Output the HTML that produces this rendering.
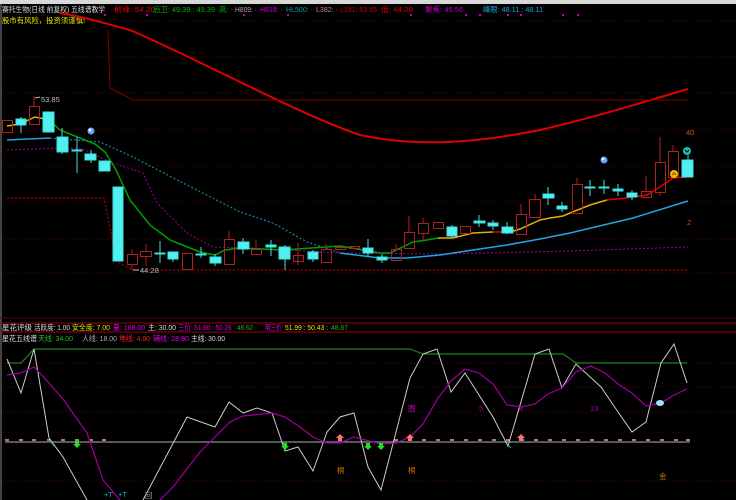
<!DOCTYPE html>
<html><head><meta charset="utf-8"><style>
html,body{margin:0;padding:0;background:#000;width:736px;height:500px;overflow:hidden}
svg{display:block}
text{font-family:"Liberation Sans","Noto Sans CJK SC",sans-serif;font-size:7.5px}
</style></head><body>
<svg width="736" height="500" viewBox="0 0 736 500" xmlns="http://www.w3.org/2000/svg">
<rect width="736" height="500" fill="#000"/>
<rect x="0" y="0" width="736" height="4" fill="#d8d8d8"/>
<line x1="1" y1="4" x2="1" y2="500" stroke="#888" stroke-width="1"/>
<g stroke="#5a0000" stroke-width="1" stroke-dasharray="1,2">
<line x1="3" y1="21" x2="736" y2="21"/><line x1="3" y1="57" x2="736" y2="57"/><line x1="3" y1="93" x2="736" y2="93"/><line x1="3" y1="130" x2="736" y2="130"/><line x1="3" y1="166" x2="736" y2="166"/><line x1="3" y1="202" x2="736" y2="202"/><line x1="3" y1="239" x2="736" y2="239"/><line x1="3" y1="273" x2="736" y2="273"/>
<line x1="3" y1="363" x2="736" y2="363"/><line x1="3" y1="387" x2="736" y2="387"/><line x1="3" y1="412" x2="736" y2="412"/><line x1="3" y1="432" x2="736" y2="432"/><line x1="3" y1="456" x2="736" y2="456"/><line x1="3" y1="481" x2="736" y2="481"/>
</g>
<g lengthAdjust="spacingAndGlyphs">
<text x="2" y="12" fill="#ddd" textLength="103" lengthAdjust="spacingAndGlyphs">赛托生物(日线 前复权) 五线谱教学</text>
<text x="114" y="12" fill="#e00000" textLength="41" lengthAdjust="spacingAndGlyphs">前锋: 54.20</text>
<text x="153" y="12" fill="#00b000" textLength="62" lengthAdjust="spacingAndGlyphs">后卫: 49.39 : 49.39</text>
<text x="219" y="12" fill="#00b000" textLength="14" lengthAdjust="spacingAndGlyphs">高: ·</text>
<text x="235" y="12" fill="#aaa" textLength="22" lengthAdjust="spacingAndGlyphs">H809: ·</text>
<text x="260" y="12" fill="#d000d0" textLength="23" lengthAdjust="spacingAndGlyphs">H618: ·</text>
<text x="286" y="12" fill="#00a0a0" textLength="27" lengthAdjust="spacingAndGlyphs">HL500: ·</text>
<text x="316" y="12" fill="#d08080" textLength="22" lengthAdjust="spacingAndGlyphs">L382: ·</text>
<text x="340" y="12" fill="#c00000" textLength="37" lengthAdjust="spacingAndGlyphs">L191: 53.65</text>
<text x="381" y="12" fill="#e00000" textLength="32" lengthAdjust="spacingAndGlyphs">低: 44.28</text>
<text x="425" y="12" fill="#c000c0" textLength="38" lengthAdjust="spacingAndGlyphs">聚焦: 45.56</text>
<text x="483" y="12" fill="#20a0e0" textLength="60" lengthAdjust="spacingAndGlyphs">峰眼: 48.11 : 48.11</text>
<text x="2" y="23" fill="#e8e800" textLength="83" lengthAdjust="spacingAndGlyphs">股市有风险，投资须谨慎!</text>
</g>
<g fill="#c000c0"><rect x="104" y="14" width="2" height="2"/><rect x="146" y="14" width="2" height="2"/><rect x="243" y="14" width="2" height="2"/><rect x="287" y="14" width="2" height="2"/><rect x="410" y="14" width="2" height="2"/><rect x="465" y="14" width="2" height="2"/><rect x="479" y="14" width="2" height="2"/><rect x="507" y="14" width="2" height="2"/><rect x="520" y="14" width="2" height="2"/><rect x="562" y="14" width="2" height="2"/><rect x="577" y="14" width="2" height="2"/></g>
<path d="M60,13 C90,18 110,25 130,30 C200,60 300,115 360,135 C420,148 480,142 540,130 C600,116 650,100 688,89" fill="none" stroke="#e00000" stroke-width="2"/>
<path d="M108,30 L110,88 L133,100 L688,100" fill="none" stroke="#800000" stroke-width="1"/>
<path d="M7,198 L104,198 L117,262 L133,270 L688,270" fill="none" stroke="#900000" stroke-width="1.5" stroke-dasharray="2,2"/>
<path d="M7,150 L60,148 L83,149 L110,162 L143,173 L157,203 L187,233 L213,247 L250,248 L340,253 L440,254 L570,251 L688,247" fill="none" stroke="#a000a0" stroke-width="1" stroke-dasharray="2,2"/>
<path d="M50,138 L100,142 L133,157 L183,183 L240,212 L273,223 L307,242 L340,253" fill="none" stroke="#1088a8" stroke-width="1.2" stroke-dasharray="2,2"/>
<path d="M7,140 L50,138" fill="none" stroke="#20a0e0" stroke-width="1.5"/>
<path d="M340,253 L380,258 L407,258 L440,255 L473,250 L507,245 L540,239 L570,233 L633,218 L688,201" fill="none" stroke="#20a8e0" stroke-width="1.5"/>
<path d="M7,126 L20,124 L35,117 L45,119 L50,121" fill="none" stroke="#e0b000" stroke-width="1.5"/>
<path d="M50,121 L60,130 L80,138 L95,144 L105,152 L115,168 L130,200 L150,225 L170,240 L190,248 L200,252 L215,255 L225,250 L240,248 L283,250 L340,246 L380,253 L390,253 L413,242 L427,240 L438,238" fill="none" stroke="#00a000" stroke-width="1.5"/>
<path d="M438,238 L453,238 L473,233 L493,232" fill="none" stroke="#e0b000" stroke-width="1.5"/>
<path d="M493,232 L510,232" fill="none" stroke="#e00000" stroke-width="1.5"/>
<path d="M510,232 L520,229 L540,220 L550,218 L563,216 L570,213 L590,205 L607,200" fill="none" stroke="#e0b000" stroke-width="1.5"/>
<path d="M607,200 L627,198 L647,195 L660,187 L673,178 L687,177" fill="none" stroke="#e00000" stroke-width="1.5"/>
<g fill="none" stroke="#b02020" stroke-width="1">
<path d="M34,96V106M160,241V263M201,247V258M229,231V239M256,240V249M298,243V265M326,244V249M396,244V249M409,216V232M423,218V223M423,233V240M521,204V214M535,194V199M646,176V191M660,137V162M660,192V196M673,145V151"/>
<rect x="2.5" y="120.5" width="10" height="12"/>
<rect x="29.5" y="106.5" width="10" height="18"/>
<rect x="127.5" y="254.5" width="10" height="10"/><path d="M132,249V254M132,264V270"/>
<rect x="140.5" y="251.5" width="11" height="5"/><path d="M146,244V251M146,256V266"/>
<rect x="182.5" y="253.5" width="10" height="16"/>
<rect x="224.5" y="239.5" width="10" height="25"/>
<rect x="251.5" y="249.5" width="10" height="5"/>
<rect x="293.5" y="255.5" width="10" height="6"/>
<rect x="321.5" y="249.5" width="10" height="13"/>
<rect x="335.5" y="247.5" width="10" height="2"/>
<rect x="349.5" y="246.5" width="10" height="2"/>
<rect x="391.5" y="249.5" width="10" height="11"/>
<rect x="404.5" y="232.5" width="10" height="16"/>
<rect x="418.5" y="223.5" width="10" height="10"/>
<rect x="433.5" y="222.5" width="10" height="6"/>
<rect x="460.5" y="226.5" width="10" height="7"/>
<rect x="516.5" y="214.5" width="10" height="20"/>
<rect x="529.5" y="199.5" width="11" height="18"/>
<rect x="572.5" y="184.5" width="10" height="29"/><path d="M577,178V184"/>
<rect x="641.5" y="191.5" width="10" height="6"/>
<rect x="655.5" y="162.5" width="10" height="30"/>
<rect x="668.5" y="151.5" width="10" height="26"/>
</g>
<g fill="#50f0f0" stroke="#40e0e0" stroke-width="1">
<path d="M21,117V133M48,112V132M62,128V154M77,137V173M91,150V163M160,241V263M173,252V262M201,247V258M215,254V266M243,238V254M271,240V256M285,245V270M313,250V262M368,239V256M382,254V263M452,225V238M479,215V227M493,220V230M507,222V234M548,187V205M562,202V212M590,180V196M604,180V194M618,184V196M632,190V200M688,155V177"/>
<rect x="16" y="119" width="10" height="6"/>
<rect x="43" y="112" width="11" height="20"/>
<rect x="57" y="137" width="11" height="15"/>
<rect x="72" y="150" width="10" height="1"/>
<rect x="85" y="154" width="11" height="6"/>
<rect x="99" y="161" width="11" height="10"/>
<rect x="113" y="187" width="10" height="74"/>
<rect x="155" y="253" width="10" height="1"/>
<rect x="168" y="252" width="10" height="7"/>
<rect x="196" y="254" width="10" height="1"/>
<rect x="210" y="257" width="11" height="6"/>
<rect x="238" y="242" width="11" height="7"/>
<rect x="266" y="245" width="10" height="2"/>
<rect x="279" y="247" width="11" height="12"/>
<rect x="308" y="252" width="10" height="7"/>
<rect x="363" y="248" width="10" height="5"/>
<rect x="377" y="257" width="10" height="3"/>
<rect x="447" y="227" width="10" height="9"/>
<rect x="474" y="221" width="11" height="2"/>
<rect x="488" y="223" width="10" height="3"/>
<rect x="502" y="227" width="11" height="6"/>
<rect x="543" y="194" width="11" height="4"/>
<rect x="557" y="206" width="10" height="3"/>
<rect x="585" y="187" width="10" height="1"/>
<rect x="599" y="187" width="10" height="1"/>
<rect x="613" y="189" width="10" height="2"/>
<rect x="627" y="193" width="10" height="4"/>
<rect x="682" y="160" width="11" height="17"/>
</g>
<text x="41" y="102" fill="#bbb">53.85</text><path d="M35,98 L40,97" stroke="#bbb"/>
<text x="140" y="273" fill="#bbb">44.28</text><path d="M133,270 L139,270" stroke="#bbb"/>
<text x="686" y="135" fill="#d05000">40</text>
<text x="687" y="225" fill="#d05000">2</text>
<circle cx="91" cy="131" r="3.5" fill="#60a0ff"/><circle cx="90" cy="130" r="1.5" fill="#e0f0ff"/>
<circle cx="604" cy="160" r="3.5" fill="#60a0ff"/><circle cx="603" cy="159" r="1.5" fill="#e0f0ff"/>
<circle cx="687" cy="151" r="4" fill="#20c0a0"/><path d="M685,150 L687,152 L689,150" stroke="#003" fill="none"/>
<circle cx="674" cy="174" r="4" fill="#f0c000"/><path d="M672,175 L674,173 L676,175" stroke="#a03000" fill="none"/>
<line x1="0" y1="318" x2="736" y2="318" stroke="#600000"/>
<line x1="0" y1="323" x2="736" y2="323" stroke="#a00000"/>
<line x1="0" y1="332" x2="736" y2="332" stroke="#a00000"/>
<text x="2" y="330" fill="#ddd" textLength="30" lengthAdjust="spacingAndGlyphs">星花评级</text>
<text x="34" y="330" fill="#ddd" textLength="36" lengthAdjust="spacingAndGlyphs">活跃度: 1.00</text>
<text x="72" y="330" fill="#e8e800" textLength="38" lengthAdjust="spacingAndGlyphs">安全度: 7.00</text>
<text x="113" y="330" fill="#e000e0" textLength="32" lengthAdjust="spacingAndGlyphs">量: 168.00</text>
<text x="148" y="330" fill="#ddd" textLength="28" lengthAdjust="spacingAndGlyphs">主: 30.00</text>
<text x="178" y="330" fill="#e000e0" textLength="57" lengthAdjust="spacingAndGlyphs">三价: 51.90 : 50.26 :</text>
<text x="237" y="330" fill="#20b020" textLength="16" lengthAdjust="spacingAndGlyphs">48.62</text>
<text x="265" y="330" fill="#e000e0" textLength="18" lengthAdjust="spacingAndGlyphs">明三价:</text>
<text x="285" y="330" fill="#e8e800" textLength="43" lengthAdjust="spacingAndGlyphs">51.99 : 50.43 :</text>
<text x="331" y="330" fill="#20b020" textLength="17" lengthAdjust="spacingAndGlyphs">48.87</text>
<text x="2" y="341" fill="#ddd" textLength="35" lengthAdjust="spacingAndGlyphs">星花五线谱</text>
<text x="38" y="341" fill="#20c020" textLength="35" lengthAdjust="spacingAndGlyphs">天线: 34.00</text>
<text x="82" y="341" fill="#aaa" textLength="35" lengthAdjust="spacingAndGlyphs">人线: 18.00</text>
<text x="119" y="341" fill="#ff2020" textLength="31" lengthAdjust="spacingAndGlyphs">地线: 4.00</text>
<text x="153" y="341" fill="#e000e0" textLength="36" lengthAdjust="spacingAndGlyphs">辅线: 28.80</text>
<text x="191" y="341" fill="#ddd" textLength="34" lengthAdjust="spacingAndGlyphs">主线: 30.00</text>
<line x1="5" y1="442" x2="690" y2="442" stroke="#777" stroke-width="1.5"/>
<g stroke="#f0a0a0" stroke-width="1.5">
<path d="M5,440h4M19,440h4M32,440h4M47,440h4M61,440h4M75,440h4M89,440h4M102,440h4"/>
<path d="M394,440h4M408,440h4M422,440h4M436,440h4M450,440h4M464,440h4M478,440h4M492,440h4M506,440h4M520,440h4M534,440h4M548,440h4M562,440h4M576,440h4M590,440h4M604,440h4M618,440h4M632,440h4M646,440h4M660,440h4M674,440h4M686,440h4"/>
</g>
<path d="M7,363 L21,363 L34,349 L410,349 L423,354 L563,354 L576,363 L687,363" fill="none" stroke="#208020" stroke-width="1.2"/>
<path d="M7,359 L21,393 L34,349 L49,438 L63,457 L87,500 M143,500 L187,417 L215,427 L229,402 L243,413 L257,408 L272,413 L285,451 L298,447 L313,471 L327,432 L340,417 L354,413 L368,467 L381,490 L410,378 L423,354 L437,349 L451,392 L465,373 L493,417 L508,446 L535,354 L549,349 L562,388 L576,364 L601,387 L618,412 L632,432 L646,422 L661,363 L674,344 L687,383" fill="none" stroke="#ccc" stroke-width="1"/>
<path d="M7,375 L21,373 L34,367 L49,383 L63,399 L87,433 L103,480 L120,500 M160,500 L173,487 L200,452 L230,422 L243,416 L272,413 L285,417 L300,427 L313,437 L327,443 L340,443 L354,437 L381,444 L396,443 L410,437 L423,424 L438,398 L451,381 L465,369 L479,373 L493,384 L507,405 L521,407 L535,404 L548,394 L562,388 L576,372 L591,366 L605,373 L618,384 L632,393 L646,406 L661,403 L674,395 L687,389" fill="none" stroke="#a000a0" stroke-width="1.2"/>
<g fill="#20e020"><path d="M75,441h4v3h2l-4,4l-4,-4h2z"/><path d="M283,443h4v3h2l-4,4l-4,-4h2z"/><path d="M366,443h4v3h2l-4,4l-4,-4h2z"/><path d="M379,443h4v3h2l-4,4l-4,-4h2z"/></g>
<g fill="#ff7070"><path d="M338,441h4v-3h2l-4,-4l-4,4h2z"/><path d="M408,441h4v-3h2l-4,-4l-4,4h2z"/><path d="M519,441h4v-3h2l-4,-4l-4,4h2z"/></g>
<text x="337" y="473" fill="#d07000">桐</text>
<text x="408" y="473" fill="#d07000">桐</text>
<text x="659" y="479" fill="#b08000">金</text>
<text x="408" y="411" fill="#c000c0">圈</text>
<text x="479" y="411" fill="#a000a0">5</text>
<text x="519" y="411" fill="#a000a0">8</text>
<text x="590" y="411" fill="#a000a0">13</text>
<text x="104" y="497" fill="#20a0c0">+T</text>
<text x="118" y="497" fill="#20a0c0">+T</text>
<text x="145" y="498" fill="#999">回</text>
<ellipse cx="660" cy="403" rx="4" ry="3" fill="#a0e0ff"/>
<path d="M51,442 L54,446" stroke="#20a0c0"/><path d="M508,445 L511,448" stroke="#20a0c0"/>
</svg>
</body></html>
